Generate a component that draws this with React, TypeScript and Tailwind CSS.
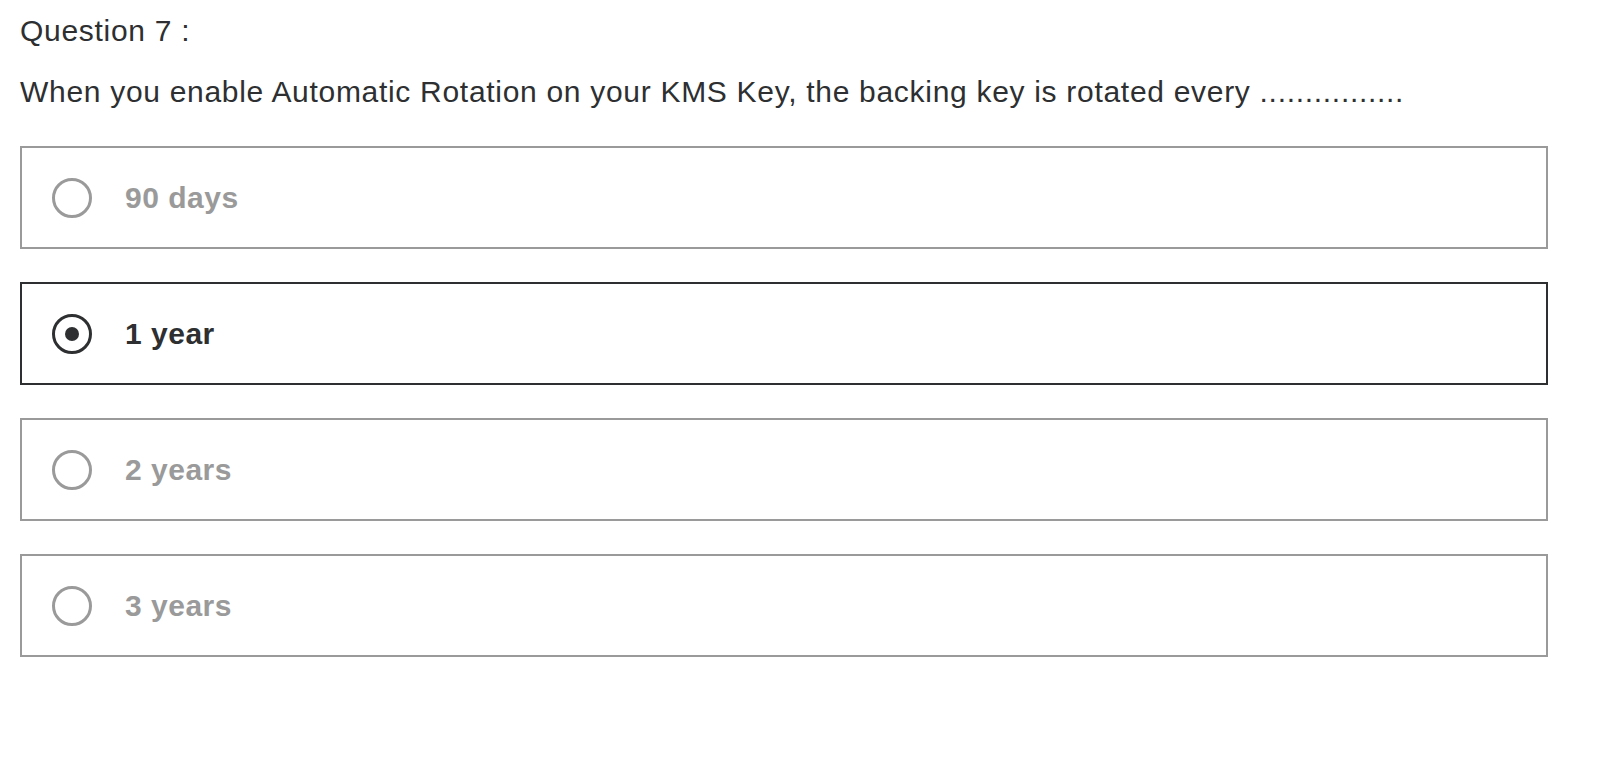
import React from "react";

const options = [
  { label: "90 days", selected: false },
  { label: "1 year", selected: true },
  { label: "2 years", selected: false },
  { label: "3 years", selected: false },
];

function Radio({ selected }: { selected: boolean }) {
  return (
    <span
      className={
        "flex h-[40px] w-[40px] shrink-0 items-center justify-center rounded-full border-[3px] " +
        (selected ? "border-[#2d2f31]" : "border-[#9a9a9a]")
      }
    >
      {selected && <span className="h-[14px] w-[14px] rounded-full bg-[#2d2f31]" />}
    </span>
  );
}

export default function App() {
  return (
    <div
      className="min-h-screen bg-white pl-[20px] pr-[62px] pt-[13px] text-[#2d2f31]"
      style={{ fontFamily: '"Liberation Sans", Arial, sans-serif' }}
    >
      <p className="text-[30px] leading-[36px] tracking-[0.7px]">Question 7 :</p>
      <p className="mt-[25px] text-[30px] leading-[36px] tracking-[0.7px]">
        When you enable Automatic Rotation on your KMS Key, the backing key is rotated every ................
      </p>

      <div className="mt-[36px] flex flex-col gap-[33px]">
        {options.map((o) => (
          <label
            key={o.label}
            className={
              "flex h-[103px] items-center border-2 pl-[30px] " +
              (o.selected ? "border-[#2d2f31]" : "border-[#9a9a9a]")
            }
          >
            <Radio selected={o.selected} />
            <span
              className={
                "ml-[33px] text-[30px] font-bold tracking-[0.5px] " +
                (o.selected ? "text-[#2d2f31]" : "text-[#9a9a9a]")
              }
            >
              {o.label}
            </span>
          </label>
        ))}
      </div>
    </div>
  );
}
